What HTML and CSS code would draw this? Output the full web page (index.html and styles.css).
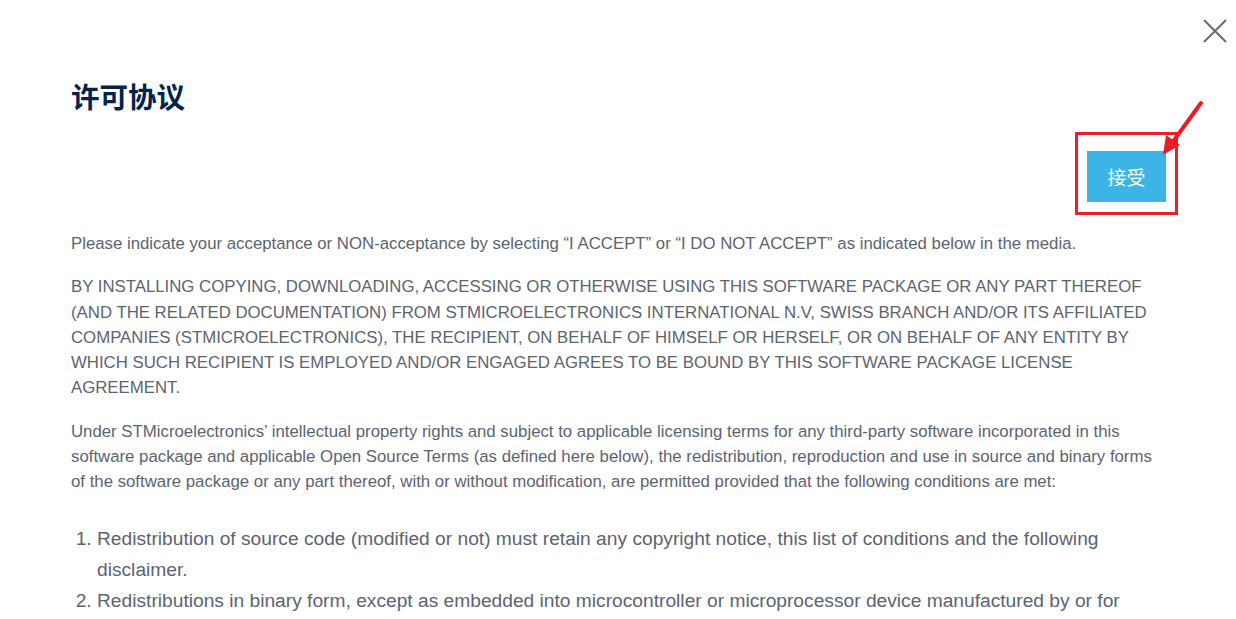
FILE: index.html
```html
<!DOCTYPE html>
<html lang="zh">
<head>
<meta charset="utf-8">
<title>许可协议</title>
<link rel="stylesheet" href="styles.css">
</head>
<body>
<div class="modal">
  <button class="close" aria-label="关闭">
    <svg width="26" height="26" viewBox="0 0 26 26"><path d="M2 2 L24 24 M24 2 L2 24" stroke="#6b6b6b" stroke-width="2" fill="none"/></svg>
  </button>
  <h1 class="title">许可协议</h1>
  <div class="actions">
    <div class="accept-wrap">
      <button class="accept">接受</button>
      <span class="highlight"></span>
    </div>
    <svg class="arrow" width="50" height="64" viewBox="0 0 50 64"><path d="M42 5 L13 45" stroke="#ea1c24" stroke-width="4" stroke-linecap="round" fill="none"/><path d="M4 57 L7 37 L21 47 Z" fill="#ea1c24"/></svg>
  </div>
  <div class="body">
    <p>Please indicate your acceptance or NON-acceptance by selecting “I ACCEPT” or “I DO NOT ACCEPT” as indicated below in the media.</p>
    <p>BY INSTALLING COPYING, DOWNLOADING, ACCESSING OR OTHERWISE USING THIS SOFTWARE PACKAGE OR ANY PART THEREOF (AND THE RELATED DOCUMENTATION) FROM STMICROELECTRONICS INTERNATIONAL N.V, SWISS BRANCH AND/OR ITS AFFILIATED COMPANIES (STMICROELECTRONICS), THE RECIPIENT, ON BEHALF OF HIMSELF OR HERSELF, OR ON BEHALF OF ANY ENTITY BY WHICH SUCH RECIPIENT IS EMPLOYED AND/OR ENGAGED AGREES TO BE BOUND BY THIS SOFTWARE PACKAGE LICENSE AGREEMENT.</p>
    <p>Under STMicroelectronics’ intellectual property rights and subject to applicable licensing terms for any third-party software incorporated in this software package and applicable Open Source Terms (as defined here below), the redistribution, reproduction and use in source and binary forms of the software package or any part thereof, with or without modification, are permitted provided that the following conditions are met:</p>
    <ol class="conditions">
      <li>Redistribution of source code (modified or not) must retain any copyright notice, this list of conditions and the following disclaimer.</li>
      <li>Redistributions in binary form, except as embedded into microcontroller or microprocessor device manufactured by or for STMicroelectronics or a software update for such device, must reproduce any copyright notice provided with the binary code, this list of conditions, and the disclaimer below in the documentation and/or other materials provided with the distribution.</li>
    </ol>
  </div>
</div>
</body>
</html>
```

FILE: styles.css
```css
html, body {
  margin: 0;
  padding: 0;
  background: #ffffff;
  overflow: hidden;
  height: 619px;
}
body {
  font-family: "Liberation Sans", Arial, "Noto Sans CJK SC", sans-serif;
  color: #5c6470;
}
.modal {
  position: relative;
  padding: 76px 70px 0 71px;
}
.close {
  position: absolute;
  top: 18px;
  right: 8px;
  width: 26px;
  height: 26px;
  padding: 0;
  border: none;
  background: none;
  cursor: pointer;
}
.close svg { display: block; }
.title {
  margin: 0;
  font-family: "Noto Sans CJK SC", sans-serif;
  font-size: 28.5px;
  font-weight: 700;
  line-height: 40px;
  color: #03234b;
}
.actions {
  position: relative;
  display: flex;
  justify-content: flex-end;
  margin-top: 35px;
}
.accept-wrap {
  position: relative;
}
.accept {
  display: block;
  width: 79px;
  height: 51px;
  border: none;
  background: #3cb4e5;
  color: #ffffff;
  font-family: "Noto Sans CJK SC", sans-serif;
  font-size: 19px;
  padding: 0;
}
.highlight {
  position: absolute;
  left: -12px;
  top: -19px;
  width: 97px;
  height: 77px;
  border: 3px solid #e8202a;
  pointer-events: none;
}
.arrow {
  position: absolute;
  right: -43px;
  top: -53px;
}
.body {
  margin-top: 29px;
  font-size: 16.8px;
  line-height: 25.3px;
}
.body p {
  margin: 0 0 18px;
}
.conditions {
  margin: 28px 0 0;
  padding-left: 26px;
  font-size: 19.2px;
  line-height: 31px;
}
```
